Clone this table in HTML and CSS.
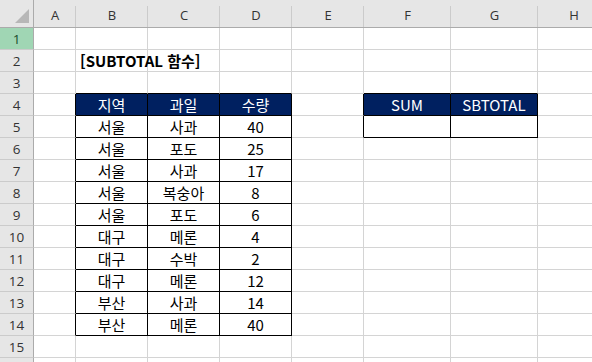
FILE: index.html
```html
<!DOCTYPE html>
<html lang="ko">
<head>
<meta charset="utf-8">
<link rel="stylesheet" href="styles.css">
</head>
<body>
<div class="sheet">
  <div class="corner"><svg width="34" height="28" viewBox="0 0 34 28"><polygon points="30,10 30,24 16,24" fill="#b7b7b7"/></svg></div>
  <div class="ch">A</div><div class="ch">B</div><div class="ch">C</div><div class="ch">D</div><div class="ch">E</div><div class="ch">F</div><div class="ch">G</div><div class="ch">H</div>

  <div class="rh sel">1</div><div class="c"></div><div class="c"></div><div class="c"></div><div class="c"></div><div class="c"></div><div class="c"></div><div class="c"></div><div class="c"></div>

  <div class="rh">2</div><div class="c"></div><div class="c title">[SUBTOTAL 함수]</div><div class="c"></div><div class="c"></div><div class="c"></div><div class="c"></div><div class="c"></div><div class="c"></div>

  <div class="rh">3</div><div class="c"></div><div class="c bb"></div><div class="c bb"></div><div class="c bb"></div><div class="c"></div><div class="c bb"></div><div class="c bb"></div><div class="c"></div>

  <div class="rh">4</div><div class="c br"></div><div class="c t hd">지역</div><div class="c t hd">과일</div><div class="c t hd">수량</div><div class="c br"></div><div class="c t hd">SUM</div><div class="c t hd">SBTOTAL</div><div class="c"></div>

  <div class="rh">5</div><div class="c br"></div><div class="c t">서울</div><div class="c t">사과</div><div class="c t">40</div><div class="c br"></div><div class="c t"></div><div class="c t"></div><div class="c"></div>

  <div class="rh">6</div><div class="c br"></div><div class="c t">서울</div><div class="c t">포도</div><div class="c t">25</div><div class="c"></div><div class="c"></div><div class="c"></div><div class="c"></div>

  <div class="rh">7</div><div class="c br"></div><div class="c t">서울</div><div class="c t">사과</div><div class="c t">17</div><div class="c"></div><div class="c"></div><div class="c"></div><div class="c"></div>

  <div class="rh">8</div><div class="c br"></div><div class="c t">서울</div><div class="c t">복숭아</div><div class="c t">8</div><div class="c"></div><div class="c"></div><div class="c"></div><div class="c"></div>

  <div class="rh">9</div><div class="c br"></div><div class="c t">서울</div><div class="c t">포도</div><div class="c t">6</div><div class="c"></div><div class="c"></div><div class="c"></div><div class="c"></div>

  <div class="rh">10</div><div class="c br"></div><div class="c t">대구</div><div class="c t">메론</div><div class="c t">4</div><div class="c"></div><div class="c"></div><div class="c"></div><div class="c"></div>

  <div class="rh">11</div><div class="c br"></div><div class="c t">대구</div><div class="c t">수박</div><div class="c t">2</div><div class="c"></div><div class="c"></div><div class="c"></div><div class="c"></div>

  <div class="rh">12</div><div class="c br"></div><div class="c t">대구</div><div class="c t">메론</div><div class="c t">12</div><div class="c"></div><div class="c"></div><div class="c"></div><div class="c"></div>

  <div class="rh">13</div><div class="c br"></div><div class="c t">부산</div><div class="c t">사과</div><div class="c t">14</div><div class="c"></div><div class="c"></div><div class="c"></div><div class="c"></div>

  <div class="rh">14</div><div class="c br"></div><div class="c t">부산</div><div class="c t">메론</div><div class="c t">40</div><div class="c"></div><div class="c"></div><div class="c"></div><div class="c"></div>

  <div class="rh">15</div><div class="c"></div><div class="c"></div><div class="c"></div><div class="c"></div><div class="c"></div><div class="c"></div><div class="c"></div><div class="c"></div>

  <div class="rh"></div><div class="c"></div><div class="c"></div><div class="c"></div><div class="c"></div><div class="c"></div><div class="c"></div><div class="c"></div><div class="c"></div>
</div>
</body>
</html>
```
FILE: styles.css
```css
html, body {
  margin: 0;
  padding: 0;
  background: #ffffff;
}
.sheet {
  width: 592px;
  height: 362px;
  overflow: hidden;
  display: grid;
  grid-template-columns: 34px 42px 72px 72px 72px 72px 87px 87px 72px;
  grid-template-rows: 28px repeat(16, 22px);
  font-family: "Noto Sans CJK KR", "Noto Sans", sans-serif;
  color: #000;
}
.sheet > div {
  box-sizing: border-box;
  white-space: nowrap;
}
.corner {
  background: #e6e6e6;
  border-right: 1px solid #ababab;
  border-bottom: 1px solid #ababab;
}
.corner svg {
  display: block;
  margin: -1px 0 0 -1px;
}
.ch {
  background: linear-gradient(#cbcbcb, #cbcbcb) right 6px / 1px calc(100% - 6px) no-repeat, #e6e6e6;
  border-bottom: 1px solid #ababab;
  font-family: "Open Sans", "Noto Sans", sans-serif;
  font-size: 13px;
  color: #333;
  display: flex;
  align-items: center;
  justify-content: center;
  padding-top: 3px;
}
.rh {
  background: #e6e6e6;
  border-right: 1px solid #ababab;
  border-bottom: 1px solid #cbcbcb;
  font-family: "Open Sans", "Noto Sans", sans-serif;
  font-size: 13.5px;
  color: #333;
  display: flex;
  align-items: center;
  justify-content: center;
}
.rh.sel {
  background: #a0d6b4;
  color: #1b4d2e;
}
.c {
  border-right: 1px solid #d4d4d4;
  border-bottom: 1px solid #d4d4d4;
  font-size: 15px;
  display: flex;
  align-items: center;
  justify-content: center;
}
.c.br {
  border-right-color: #000;
}
.c.bb {
  border-bottom-color: #000;
}
.c.t {
  border-right-color: #000;
  border-bottom-color: #000;
}
.c.hd {
  background: #002060;
  color: #ffffff;
}
.c.title {
  justify-content: flex-start;
  padding-left: 4px;
  font-weight: bold;
  overflow: visible;
  position: relative;
  z-index: 1;
}
```
